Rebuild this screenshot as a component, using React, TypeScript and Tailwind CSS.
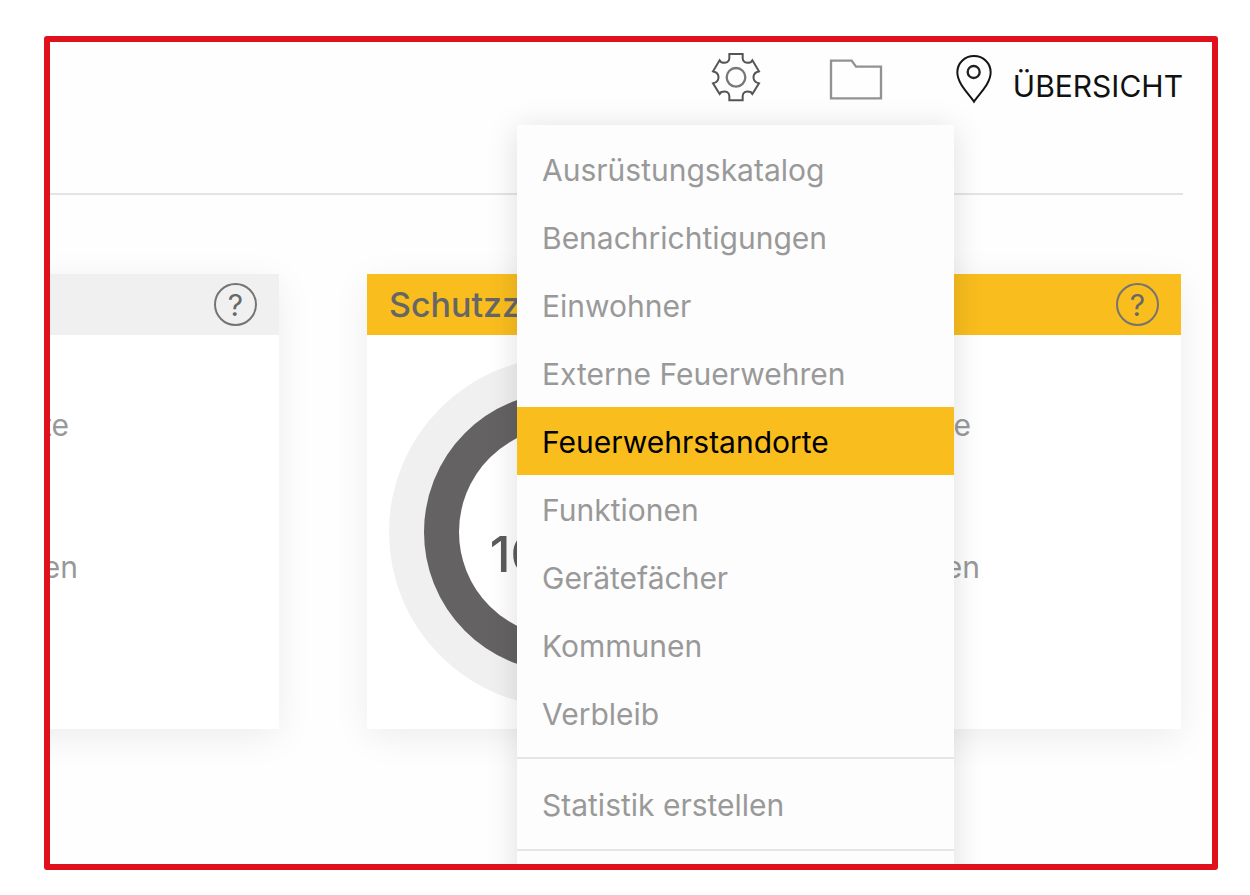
import React from "react";

const GENERAL_ITEMS = [
  "Ausrüstungskatalog",
  "Benachrichtigungen",
  "Einwohner",
  "Externe Feuerwehren",
  "Feuerwehrstandorte",
  "Funktionen",
  "Gerätefächer",
  "Kommunen",
  "Verbleib",
];

const ACTIVE_ITEM = "Feuerwehrstandorte";

function GearIcon() {
  return (
    <svg viewBox="0 0 156 156" className="size-[52px]" fill="none" aria-hidden="true">
      <path
        d="M58 9H98V22C98 33 107 38 122 34L127 28L147 61L141 63C127 69 127 89 141 95L147 97L127 129L122 123C107 119 98 124 98 135V148H58V135C58 124 49 119 34 123L29 129L9 97L15 95C29 89 29 69 15 63L9 61L29 28L34 34C49 38 58 33 58 22Z"
        stroke="#555555"
        strokeWidth="6"
      />
      <circle cx="78" cy="79" r="28" stroke="#777777" strokeWidth="7" />
    </svg>
  );
}

function FolderIcon() {
  return (
    <svg viewBox="0 0 162 126" className="h-[42px] w-[54px]" fill="none" aria-hidden="true">
      <path d="M6 8H68L81 26H156V121H6Z" stroke="#929292" strokeWidth="7" />
    </svg>
  );
}

function PinIcon() {
  return (
    <svg viewBox="0 0 114 150" className="h-[50px] w-[38px]" fill="none" aria-hidden="true">
      <path
        d="M57 143C44 122 7 90 7 55C7 27 29 6 57 6C85 6 107 27 107 55C107 90 70 122 57 143Z"
        stroke="#151515"
        strokeWidth="6"
      />
      <circle cx="56" cy="54" r="18" stroke="#222222" strokeWidth="7" />
    </svg>
  );
}

function HelpButton() {
  return (
    <button
      type="button"
      aria-label="Hilfe"
      className="flex size-[43px] items-center justify-center rounded-full border-2 border-[#767472] text-[30px] leading-none text-[#686868]"
    >
      ?
    </button>
  );
}

function Captions() {
  return (
    <div className="mt-[70px] ml-auto flex w-[229px] flex-col gap-[102px] text-[30px] leading-[40px] text-[#999999]">
      <span className="flex w-[19px] justify-end overflow-hidden">te</span>
      <span className="flex w-[28px] justify-end overflow-hidden">en</span>
    </div>
  );
}

function MenuItem({ label }: { label: string }) {
  const active = label === ACTIVE_ITEM;
  return (
    <a
      href="#"
      className={
        active
          ? "flex h-[68px] items-center bg-[#f9bd1e] px-[25px] pt-[2px] text-black"
          : "flex h-[68px] items-center px-[25px] pt-[2px] text-[#999999]"
      }
    >
      {label}
    </a>
  );
}

export default function App() {
  return (
    <div className="flex min-h-screen bg-white pt-[36px] pr-[32px] pb-[25px] pl-[44px] font-['Inter','Liberation_Sans',sans-serif]">
      <div className="relative flex-1 overflow-hidden rounded-[3px] border-6 border-[#df111d] bg-[#fefefe]">
        <header className="mr-[29px] flex h-[153px] items-start justify-end border-b-2 border-[#e4e4e4] pt-[8px]">
          <button type="button" aria-label="Einstellungen" className="mt-[1px] mr-[67px]">
            <GearIcon />
          </button>
          <button type="button" aria-label="Ordner" className="mt-[8px] mr-[72px]">
            <FolderIcon />
          </button>
          <a href="#" className="mt-[4px] flex gap-[20px] text-[30px] leading-[64px] text-[#111111]">
            <PinIcon />
            ÜBERSICHT
          </a>
        </header>

        <main className="mt-[79px] mr-[31px] -ml-[60px] flex gap-[88px]">
          <section className="w-[289px] shrink-0 bg-white shadow-[0_8px_34px_rgba(0,0,0,0.07)]">
            <div className="flex h-[61px] items-center justify-end bg-[#f0f0f0] px-[22px]">
              <HelpButton />
            </div>
            <Captions />
          </section>

          <section className="flex-1 bg-white shadow-[0_8px_34px_rgba(0,0,0,0.07)]">
            <div className="flex h-[61px] items-center justify-between bg-[#f9bd1e] px-[22px]">
              <h2 className="text-[34px] font-medium text-[#666666]">Schutzziele</h2>
              <HelpButton />
            </div>
            <div className="flex">
              <div className="my-[22px] ml-[22px] flex size-[350px] shrink-0 rounded-full bg-[#f0f0f0] p-[35px]">
                <div className="flex flex-1 items-center justify-center rounded-full border-35 border-[#646263] bg-white pt-[44px] text-[50px] leading-none font-medium text-[#5c5c5c]">
                  100 %
                </div>
              </div>
              <Captions />
            </div>
          </section>
        </main>

        <nav
          aria-label="Einstellungen"
          className="absolute top-[83px] right-[258px] w-[437px] bg-[#fdfdfd] text-[30px] leading-[40px] shadow-[0_4px_30px_rgba(0,0,0,0.13)]"
        >
          <div className="py-[10px]">
            {GENERAL_ITEMS.map((label) => (
              <MenuItem key={label} label={label} />
            ))}
          </div>
          <div className="border-y-2 border-[#e6e6e6] py-[11px]">
            <MenuItem label="Statistik erstellen" />
          </div>
          <div className="h-[60px]" />
        </nav>
      </div>
    </div>
  );
}
